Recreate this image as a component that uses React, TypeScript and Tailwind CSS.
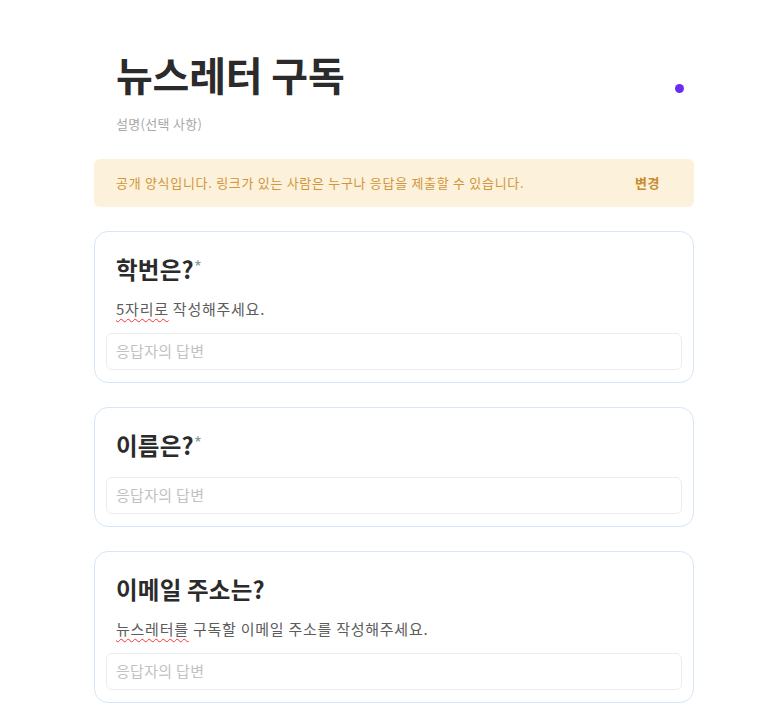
import React from 'react';

const FONT = { fontFamily: '"Noto Sans CJK KR", "Noto Sans", sans-serif' };

interface QuestionProps {
  title: string;
  required?: boolean;
  desc?: React.ReactNode;
}

const QuestionCard: React.FC<QuestionProps> = ({ title, required, desc }) => (
  <section className="bg-white border border-[#d6e6f7] rounded-[14px] px-[11px] pt-[21px] pb-[12px]">
    <h2 className="px-[10px] text-[23.5px] font-bold text-[#2b2b2b] leading-[32px] flex items-start tracking-[0.2px]">
      {title}
      {required && <span className="text-[#9a9a9a] font-normal text-[18px] leading-[26px]">*</span>}
    </h2>
    {desc && (
      <p className="px-[10px] mt-[13px] text-[15px] text-[#5c5c5c] leading-[22px] tracking-[0.75px]">{desc}</p>
    )}
    <div className={`${desc ? 'mt-[13px]' : 'mt-[16px]'} h-[37px] border border-[#ececec] rounded-[6px] pl-[9px] flex items-center`}>
      <span className="text-[15px] text-[#c2c2c2] tracking-[0.3px]">응답자의 답변</span>
    </div>
  </section>
);

const Squiggle: React.FC<{ children: React.ReactNode }> = ({ children }) => (
  <span className="underline decoration-wavy decoration-[#ff3030] decoration-1 underline-offset-[3px]">{children}</span>
);

export default function App() {
  return (
    <div className="min-h-screen bg-white" style={FONT}>
      <div className="ml-[94px] w-[600px] pt-[44px] pb-6">
        <header className="px-[22px] flex items-start justify-between">
          <div>
            <h1 className="text-[40px] font-bold text-[#2b2b2b] leading-[60px] tracking-[-0.2px]">뉴스레터 구독</h1>
            <p className="mt-[10px] text-[13px] text-[#a8a8a8] leading-[20px] tracking-[0.3px]">설명(선택 사항)</p>
          </div>
          <span className="mt-[40px] mr-[-12px] w-[9px] h-[9px] rounded-full bg-[#6a2cf5]" />
        </header>

        <div className="mt-[25px] h-[48px] bg-[#fcf1da] rounded-[6px] pl-[22px] pr-[34px] flex items-center justify-between">
          <span className="text-[13px] text-[#d2963a] tracking-[0.7px]">공개 양식입니다. 링크가 있는 사람은 누구나 응답을 제출할 수 있습니다.</span>
          <button className="text-[13px] font-bold text-[#c98a2e] tracking-[0.5px]">변경</button>
        </div>

        <div className="mt-[24px] flex flex-col gap-[24px]">
          <QuestionCard
            title="학번은?"
            required
            desc={<><Squiggle>5자리로</Squiggle> 작성해주세요.</>}
          />
          <QuestionCard title="이름은?" required />
          <QuestionCard
            title="이메일 주소는?"
            desc={<><Squiggle>뉴스레터를</Squiggle> 구독할 이메일 주소를 작성해주세요.</>}
          />
        </div>
      </div>
    </div>
  );
}
